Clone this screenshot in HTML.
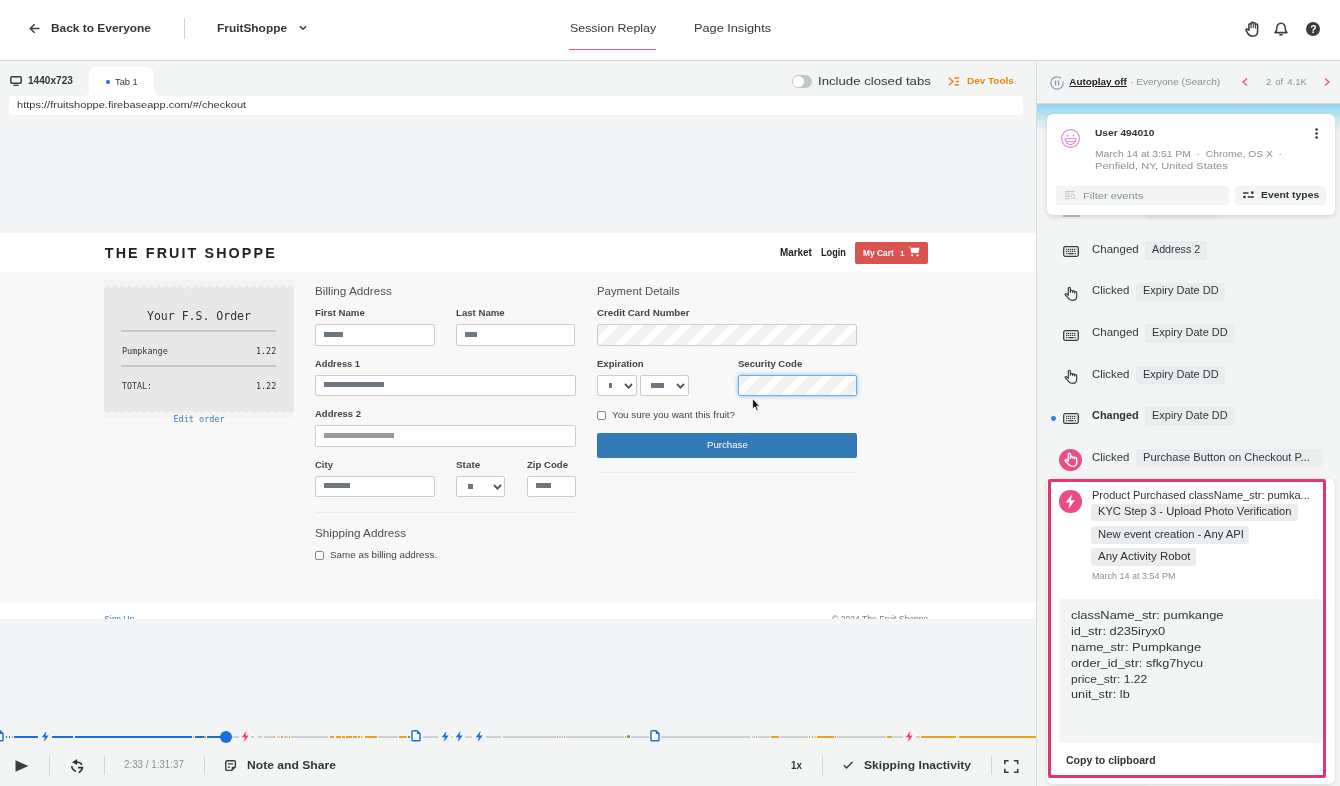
<!DOCTYPE html>
<html lang="en">
<head>
<meta charset="utf-8">
<title>Session Replay</title>
<style>
*{box-sizing:border-box;margin:0;padding:0}
html,body{width:1340px;height:786px;overflow:hidden;background:#f3f5f5;font-family:"Liberation Sans",sans-serif;color:#34373a}
.a{position:absolute;white-space:nowrap;line-height:1;transform-origin:0 0}
.b{font-weight:bold}
.g{color:#8a9095}

.mono{font-family:"DejaVu Sans Mono","Liberation Mono",monospace}
#app{position:absolute;left:0;top:0;width:1340px;height:786px;overflow:hidden;will-change:transform}
.d{position:absolute}
svg{position:absolute;overflow:visible}
.chip{position:absolute;background:#eaeced;border-radius:3px}
.inp{position:absolute;background:#fff;border:1px solid #ccc;border-radius:2px}
.m{position:absolute;background:#7b848d;height:4px}
.lab{font-weight:bold;color:#444}
.vd{position:absolute;width:1px;background:#d5d8da}
</style>
</head>
<body>
<div id="app">
<div class="d" style="left:0;top:115px;width:1036px;height:613px;background:#f4f5f7"></div>
<!-- top bar -->
<div class="d" style="left:0;top:0;width:1340px;height:61px;background:#fff;border-bottom:1px solid #d2d5d7"></div><svg style="left:29px;top:23px" width="11" height="11" viewBox="0 0 11 11"><path d="M10.5 5.5H1.8M5.6 1.2L1.3 5.5L5.6 9.8" fill="none" stroke="#3a3d40" stroke-width="1.5"/></svg><span class="a b" style="left:51.0px;top:23px;font-size:11.5px;transform:scaleX(1.036);">Back to Everyone</span><div class="d" style="left:183.5px;top:18px;width:1.5px;height:21px;background:#d0d3d5"></div><span class="a b" style="left:217.0px;top:23px;font-size:11.5px;transform:scaleX(1.034);">FruitShoppe</span><svg style="left:299px;top:25px" width="8" height="6" viewBox="0 0 8 6"><path d="M1 1.2L4 4.2L7 1.2" fill="none" stroke="#3a3d40" stroke-width="1.6"/></svg><span class="a" style="left:569.5px;top:23px;font-size:11.5px;transform:scaleX(1.078);">Session Replay</span><div class="d" style="left:569px;top:48.5px;width:87px;height:1.5px;background:#ee4b80"></div><span class="a" style="left:694.4px;top:23px;font-size:11.5px;transform:scaleX(1.106);">Page Insights</span><svg style="left:1245px;top:21px" width="15.200" height="16" viewBox="0 0 14 16" preserveAspectRatio="none"><path d="M3.6 9.2V3.6a1 1 0 0 1 2 0V2.2a1 1 0 0 1 2 0V2.6a1 1 0 0 1 2 0V4a1 1 0 0 1 2 0V10.5c0 3-1.8 4.7-4.6 4.7c-2.2 0-3.4-1-4.4-2.8L1 9.4c-.5-1 .7-1.8 1.5-1z" fill="none" stroke="#3a3d40" stroke-width="1.45" stroke-linejoin="round"/><path d="M5.6 3.4V7.4M7.6 2.6V7.2M9.6 3.2V7.4" stroke="#3a3d40" stroke-width="1" fill="none"/></svg><svg style="left:1274px;top:22px" width="14" height="14" viewBox="0 0 14 14"><path d="M1 10.6h12c-1.4-1-1.8-2.2-1.8-4.6c0-2.8-1.8-4.8-4.2-4.8S2.8 3.2 2.8 6C2.8 8.400 2.400 9.600 1 10.600z" fill="none" stroke="#3a3d40" stroke-width="1.55" stroke-linejoin="round"/><path d="M5.800 12.800h2.400" stroke="#3a3d40" stroke-width="1.4" stroke-linecap="round"/></svg><div class="d" style="left:1306px;top:22px;width:14px;height:14px;border-radius:50%;background:#3a3d40"></div><span class="a b" style="left:1310.2px;top:25px;font-size:10.4px;color:#fff">?</span>
<!-- tab row -->
<svg style="left:9.500px;top:76px" width="12" height="10" viewBox="0 0 12 10"><rect x="0.800" y="0.800" width="10.400" height="6.400" rx="1.200" fill="none" stroke="#3a3d40" stroke-width="1.500"/><path d="M3.500 9.300h5" stroke="#3a3d40" stroke-width="1.300"/></svg><span class="a b" style="left:28.2px;top:76px;font-size:10px;transform:scaleX(1.009);">1440x723</span><div class="d" style="left:89px;top:67px;width:65px;height:30px;background:#fff;border-radius:7px 7px 0 0"></div><svg style="left:83px;top:90px" width="77" height="6" viewBox="0 0 77 6"><path d="M0 6Q6 6 6 0V6zM77 6Q71 6 71 0V6z" fill="#fff"/></svg><div class="d" style="left:105.800px;top:79.500px;width:4.400px;height:4.800px;border-radius:50%;background:#1877f2"></div><span class="a" style="left:114.7px;top:77px;font-size:9.8px;transform:scaleX(0.951);">Tab 1</span><div class="d" style="left:9px;top:96px;width:1014px;height:19px;background:#fff;border-radius:3px"></div><span class="a" style="left:16.8px;top:100px;font-size:9.9px;transform:scaleX(1.119);">https://fruitshoppe.firebaseapp.com/#/checkout</span><div class="d" style="left:792px;top:75px;width:20px;height:12.500px;border-radius:7px;background:#c3c7ca"></div><div class="d" style="left:793px;top:76px;width:10.500px;height:10.500px;border-radius:50%;background:#fff"></div><span class="a" style="left:818.2px;top:76px;font-size:11.5px;transform:scaleX(1.146);">Include closed tabs</span><svg style="left:948px;top:77px" width="11" height="9" viewBox="0 0 11 9"><path d="M0.800 0.800L5 4.500L0.800 8.200M6.500 0.900H11M8 4.500H11M6.500 8.100H11" fill="none" stroke="#e8870e" stroke-width="1.500"/></svg><span class="a b" style="left:966.6px;top:76px;font-size:9.9px;transform:scaleX(1.007);color:#e8870e">Dev Tools</span>
<!-- replayed site -->
<div class="d" style="left:0;top:233px;width:1036px;height:386px;background:#f8f8f8"></div><div class="d" style="left:0;top:233px;width:1036px;height:38.500px;background:#fff"></div><span class="a b" style="left:104.8px;top:246px;font-size:14.3px;letter-spacing:2.11px;color:#222">THE FRUIT SHOPPE</span><span class="a b" style="left:780.4px;top:248px;font-size:10px;transform:scaleX(0.986);color:#222">Market</span><span class="a b" style="left:821.1px;top:248px;font-size:10px;transform:scaleX(0.915);color:#222">Login</span><div class="d" style="left:854.500px;top:242px;width:73px;height:21.500px;background:#d9534f;border-radius:2px"></div><span class="a b" style="left:862.6px;top:249px;font-size:9px;transform:scaleX(0.930);color:#fff">My Cart</span><span class="a b" style="left:900.0px;top:250px;font-size:8px;color:#fff">1</span><svg style="left:908px;top:246px" width="12" height="11" viewBox="0 0 12 11"><path d="M0 0.600H2L3.200 7H10.500L11.500 1.800H2.400z" fill="#fff"/><circle cx="4.200" cy="9.300" r="1.100" fill="#fff"/><circle cx="9.500" cy="9.300" r="1.100" fill="#fff"/></svg><div class="d" style="left:104px;top:280px;width:190px;height:138px;background:#f4f4f4"></div><svg style="left:104px;top:285.400px" width="190" height="128" viewBox="0 0 190 128"><path d="M0 3.600L3.65 0L7.31 3.600L10.96 0L14.62 3.600L18.27 0L21.92 3.600L25.58 0L29.23 3.600L32.88 0L36.54 3.600L40.19 0L43.85 3.600L47.50 0L51.15 3.600L54.81 0L58.46 3.600L62.12 0L65.77 3.600L69.42 0L73.08 3.600L76.73 0L80.38 3.600L84.04 0L87.69 3.600L91.35 0L95.00 3.600L98.65 0L102.31 3.600L105.96 0L109.62 3.600L113.27 0L116.92 3.600L120.58 0L124.23 3.600L127.88 0L131.54 3.600L135.19 0L138.85 3.600L142.50 0L146.15 3.600L149.81 0L153.46 3.600L157.12 0L160.77 3.600L164.42 0L168.08 3.600L171.73 0L175.38 3.600L179.04 0L182.69 3.600L186.35 0L190.00 3.6V125.600L186.35 128L182.69 125.600L179.04 128L175.38 125.600L171.73 128L168.08 125.600L164.42 128L160.77 125.600L157.12 128L153.46 125.600L149.81 128L146.15 125.600L142.50 128L138.85 125.600L135.19 128L131.54 125.600L127.88 128L124.23 125.600L120.58 128L116.92 125.600L113.27 128L109.62 125.600L105.96 128L102.31 125.600L98.65 128L95.00 125.600L91.35 128L87.69 125.600L84.04 128L80.38 125.600L76.73 128L73.08 125.600L69.42 128L65.77 125.600L62.12 128L58.46 125.600L54.81 128L51.15 125.600L47.50 128L43.85 125.600L40.19 128L36.54 125.600L32.88 128L29.23 125.600L25.58 128L21.92 125.600L18.27 128L14.62 125.600L10.96 128L7.31 125.600L3.65 128L0.00 125.600z" fill="#e8e8e8"/></svg><span class="a mono" style="left:147.0px;top:311px;font-size:11.6px;transform:scaleX(0.993);color:#333">Your F.S. Order</span><div class="d" style="left:121px;top:330px;width:155px;height:1.500px;background:#c3c8c9"></div><span class="a mono" style="left:122.2px;top:347px;font-size:8.5px;transform:scaleX(0.994);color:#333">Pumpkange</span><span class="a mono" style="left:255.7px;top:347px;font-size:8.5px;transform:scaleX(0.986);color:#333">1.22</span><div class="d" style="left:121px;top:365px;width:155px;height:1.500px;background:#c3c8c9"></div><span class="a mono" style="left:122.2px;top:382px;font-size:8.5px;transform:scaleX(0.973);color:#333">TOTAL:</span><span class="a mono" style="left:255.7px;top:382px;font-size:8.5px;transform:scaleX(0.986);color:#333">1.22</span><span class="a mono" style="left:173.5px;top:415px;font-size:8.5px;color:#3f7cbf">Edit order</span><span class="a" style="left:315.0px;top:286px;font-size:11px;transform:scaleX(1.067);color:#4b5056">Billing Address</span><span class="a lab" style="left:315.0px;top:308px;font-size:9.5px;transform:scaleX(1.014);">First Name</span><div class="inp" style="left:315px;top:324px;width:119.6px;height:21.7px;"></div><div class="d" style="left:324.3px;top:332px;width:18.9px;height:5.0px;background:#6e7781"></div><span class="a lab" style="left:455.8px;top:308px;font-size:9.5px;transform:scaleX(1.013);">Last Name</span><div class="inp" style="left:455.8px;top:324px;width:119.7px;height:21.7px;"></div><div class="d" style="left:465px;top:332px;width:12.0px;height:5.0px;background:#6e7781"></div><span class="a lab" style="left:315.0px;top:359px;font-size:9.5px;transform:scaleX(0.980);">Address 1</span><div class="inp" style="left:315px;top:374.8px;width:260.5px;height:21.4px;"></div><div class="d" style="left:324.3px;top:382.2px;width:59.9px;height:4.8px;background:#6e7781"></div><span class="a lab" style="left:315.0px;top:409px;font-size:9.5px;">Address 2</span><div class="inp" style="left:315px;top:425px;width:260.5px;height:21.6px;"></div><div class="d" style="left:324.3px;top:433px;width:69.6px;height:4.8px;background:#9a9a9a"></div><span class="a lab" style="left:315.0px;top:460px;font-size:9.5px;">City</span><div class="inp" style="left:315px;top:476.1px;width:119.6px;height:21.4px;"></div><div class="d" style="left:324.3px;top:483.4px;width:25.7px;height:4.6px;background:#6e7781"></div><span class="a lab" style="left:455.8px;top:460px;font-size:9.5px;transform:scaleX(1.042);">State</span><div class="inp" style="left:455.8px;top:476.1px;width:49.1px;height:21.4px;"></div><div class="d" style="left:468px;top:484px;width:5.0px;height:5.0px;background:#6e7781"></div><svg style="left:492.7px;top:484.3px" width="9" height="6" viewBox="0 0 9 6"><path d="M1 1L4.500 4.600L8 1" fill="none" stroke="#50555a" stroke-width="1.800"/></svg><span class="a lab" style="left:527.0px;top:460px;font-size:9.5px;transform:scaleX(1.011);">Zip Code</span><div class="inp" style="left:527px;top:476.1px;width:48.5px;height:21.4px;"></div><div class="d" style="left:535.9px;top:483.2px;width:15.1px;height:4.8px;background:#6e7781"></div><div class="d" style="left:315px;top:512px;width:261px;height:1px;background:#ececec"></div><span class="a" style="left:315.0px;top:528px;font-size:11px;transform:scaleX(1.063);color:#4b5056">Shipping Address</span><div class="d" style="left:315px;top:550.500px;width:9px;height:9px;background:#fff;border:1px solid #858585;border-radius:2px"></div><span class="a" style="left:330.0px;top:550px;font-size:9.5px;transform:scaleX(1.035);color:#444">Same as billing address.</span><span class="a" style="left:596.7px;top:286px;font-size:11px;transform:scaleX(1.034);color:#4b5056">Payment Details</span><span class="a lab" style="left:596.7px;top:308px;font-size:9.5px;transform:scaleX(1.025);">Credit Card Number</span><div class="inp" style="left:596.7px;top:324px;width:260.1px;height:21.7px;background:repeating-linear-gradient(135deg,#eff1f3 0,#eff1f3 8.200px,#fff 8.700px,#fff 15.500px,#eff1f3 16px,#eff1f3 17px);"></div><span class="a lab" style="left:596.7px;top:359px;font-size:9.5px;transform:scaleX(1.005);">Expiration</span><div class="inp" style="left:596.7px;top:374.8px;width:40.1px;height:21.4px;"></div><div class="d" style="left:608.6px;top:383px;width:3.6px;height:4.8px;background:#6e7781"></div><svg style="left:623.5px;top:383px" width="9" height="6" viewBox="0 0 9 6"><path d="M1 1L4.500 4.600L8 1" fill="none" stroke="#50555a" stroke-width="1.800"/></svg><div class="inp" style="left:639.9px;top:374.8px;width:49.3px;height:21.4px;"></div><div class="d" style="left:650.5px;top:383px;width:13.5px;height:4.5px;background:#6e7781"></div><svg style="left:675.5px;top:383px" width="9" height="6" viewBox="0 0 9 6"><path d="M1 1L4.500 4.600L8 1" fill="none" stroke="#50555a" stroke-width="1.800"/></svg><span class="a lab" style="left:737.8px;top:359px;font-size:9.5px;transform:scaleX(1.006);">Security Code</span><div class="inp" style="left:737.8px;top:374.8px;width:119.0px;height:21.4px;background:repeating-linear-gradient(135deg,#eff1f3 0,#eff1f3 8.200px,#fff 8.700px,#fff 15.500px,#eff1f3 16px,#eff1f3 17px);border-color:#66afe9;box-shadow:0 0 4px rgba(102,175,233,.8)"></div><div class="d" style="left:597px;top:411px;width:9px;height:9px;background:#fff;border:1px solid #858585;border-radius:2px"></div><span class="a" style="left:612.0px;top:410px;font-size:9.5px;transform:scaleX(1.034);color:#444">You sure you want this fruit?</span><div class="d" style="left:597px;top:433px;width:260px;height:25px;background:#337ab7;border-radius:2px"></div><span class="a" style="left:706.6px;top:440px;font-size:9.5px;transform:scaleX(1.016);color:#fff">Purchase</span><div class="d" style="left:597px;top:472px;width:260px;height:1px;background:#efefef"></div><svg style="left:752px;top:397.500px" width="8" height="14" viewBox="0 0 8 14"><path d="M0.600 0.600V11L3 8.800L4.700 12.800L6.300 12.100L4.600 8.200H7.600z" fill="#111" stroke="#fff" stroke-width="0.800"/></svg><div class="d" style="left:0;top:602px;width:1036px;height:17px;background:#fff;overflow:hidden"></div><div class="d" style="left:0;top:602px;width:1036px;height:17px;overflow:hidden"><div class="d" style="left:0;top:-602px"><span class="a" style="left:104.0px;top:615px;font-size:8.5px;color:#337ab7">Sign Up</span><span class="a" style="left:831.5px;top:615px;font-size:8.5px;transform:scaleX(1.009);color:#777">© 2024 The Fruit Shoppe</span></div></div>
<!-- timeline -->
<div class="d" style="left:232px;top:736.2px;width:6.6px;height:1.6px;background:#cdd1d3"></div><div class="d" style="left:251px;top:736.2px;width:3.0px;height:1.6px;background:#cdd1d3"></div><div class="d" style="left:257.8px;top:736.2px;width:3.9px;height:1.6px;background:#cdd1d3"></div><div class="d" style="left:264px;top:736.2px;width:9.5px;height:1.6px;background:#cdd1d3"></div><div class="d" style="left:276.5px;top:736.2px;width:3.0px;height:1.6px;background:#cdd1d3"></div><div class="d" style="left:284px;top:736.2px;width:3.5px;height:1.6px;background:#cdd1d3"></div><div class="d" style="left:290.8px;top:736.2px;width:36.9px;height:1.6px;background:#cdd1d3"></div><div class="d" style="left:378px;top:736.2px;width:19.5px;height:1.6px;background:#cdd1d3"></div><div class="d" style="left:422.8px;top:736.2px;width:15.2px;height:1.6px;background:#cdd1d3"></div><div class="d" style="left:451px;top:736.2px;width:2.0px;height:1.6px;background:#cdd1d3"></div><div class="d" style="left:465px;top:736.2px;width:7.4px;height:1.6px;background:#cdd1d3"></div><div class="d" style="left:485.8px;top:736.2px;width:15.2px;height:1.6px;background:#cdd1d3"></div><div class="d" style="left:503px;top:736.2px;width:53.0px;height:1.6px;background:#cdd1d3"></div><div class="d" style="left:559px;top:736.2px;width:4.0px;height:1.6px;background:#cdd1d3"></div><div class="d" style="left:566px;top:736.2px;width:58.0px;height:1.6px;background:#cdd1d3"></div><div class="d" style="left:631px;top:736.2px;width:18.4px;height:1.6px;background:#cdd1d3"></div><div class="d" style="left:661px;top:736.2px;width:89.0px;height:1.6px;background:#cdd1d3"></div><div class="d" style="left:752px;top:736.2px;width:2.5px;height:1.6px;background:#cdd1d3"></div><div class="d" style="left:758px;top:736.2px;width:12.0px;height:1.6px;background:#cdd1d3"></div><div class="d" style="left:780px;top:736.2px;width:27.6px;height:1.6px;background:#cdd1d3"></div><div class="d" style="left:814px;top:736.2px;width:2.0px;height:1.6px;background:#cdd1d3"></div><div class="d" style="left:837.3px;top:736.2px;width:48.7px;height:1.6px;background:#cdd1d3"></div><div class="d" style="left:893px;top:736.2px;width:9.7px;height:1.6px;background:#cdd1d3"></div><div class="d" style="left:915.7px;top:736.2px;width:4.1px;height:1.6px;background:#cdd1d3"></div><div class="d" style="left:956.8px;top:736.2px;width:1.2px;height:1.6px;background:#cdd1d3"></div><div class="d" style="left:5.8px;top:736px;width:1.6px;height:2px;background:#1a6ee0"></div><div class="d" style="left:8.5px;top:736px;width:1.2px;height:2px;background:#1a6ee0"></div><div class="d" style="left:14px;top:736px;width:24.4px;height:2px;background:#1a6ee0"></div><div class="d" style="left:51.8px;top:736px;width:21.0px;height:2px;background:#1a6ee0"></div><div class="d" style="left:75.3px;top:736px;width:116.7px;height:2px;background:#1a6ee0"></div><div class="d" style="left:195px;top:736px;width:8.7px;height:2px;background:#1a6ee0"></div><div class="d" style="left:206.8px;top:736px;width:15.2px;height:2px;background:#1a6ee0"></div><div class="d" style="left:11.6px;top:736.1px;width:1.2px;height:1.8px;background:#f0a020"></div><div class="d" style="left:192.5px;top:736.1px;width:1.5px;height:1.8px;background:#f0a020"></div><div class="d" style="left:204.3px;top:736.1px;width:1.3px;height:1.8px;background:#f0a020"></div><div class="d" style="left:274px;top:736.1px;width:1.0px;height:1.8px;background:#f0a020"></div><div class="d" style="left:280.7px;top:736.1px;width:2.3px;height:1.8px;background:#f0a020"></div><div class="d" style="left:288.6px;top:736.1px;width:1.2px;height:1.8px;background:#f0a020"></div><div class="d" style="left:329.8px;top:736.1px;width:4.2px;height:1.8px;background:#f0a020"></div><div class="d" style="left:336px;top:736.1px;width:5.0px;height:1.8px;background:#f0a020"></div><div class="d" style="left:342px;top:736.1px;width:2.8px;height:1.8px;background:#f0a020"></div><div class="d" style="left:346px;top:736.1px;width:6.0px;height:1.8px;background:#f0a020"></div><div class="d" style="left:353px;top:736.1px;width:4.0px;height:1.8px;background:#f0a020"></div><div class="d" style="left:358.4px;top:736.1px;width:1.2px;height:1.8px;background:#f0a020"></div><div class="d" style="left:361px;top:736.1px;width:1.2px;height:1.8px;background:#f0a020"></div><div class="d" style="left:365px;top:736.1px;width:11.8px;height:1.8px;background:#f0a020"></div><div class="d" style="left:399px;top:736.1px;width:7.9px;height:1.8px;background:#f0a020"></div><div class="d" style="left:556.8px;top:736.1px;width:1.0px;height:1.8px;background:#f0a020"></div><div class="d" style="left:564px;top:736.1px;width:1.0px;height:1.8px;background:#f0a020"></div><div class="d" style="left:625px;top:736.1px;width:0.8px;height:1.8px;background:#f0a020"></div><div class="d" style="left:756px;top:736.1px;width:1.0px;height:1.8px;background:#f0a020"></div><div class="d" style="left:771px;top:736.1px;width:8.2px;height:1.8px;background:#f0a020"></div><div class="d" style="left:809px;top:736.1px;width:1.0px;height:1.8px;background:#f0a020"></div><div class="d" style="left:812px;top:736.1px;width:1.0px;height:1.8px;background:#f0a020"></div><div class="d" style="left:817px;top:736.1px;width:17.2px;height:1.8px;background:#f0a020"></div><div class="d" style="left:835.3px;top:736.1px;width:0.9px;height:1.8px;background:#f0a020"></div><div class="d" style="left:887px;top:736.1px;width:5.0px;height:1.8px;background:#f0a020"></div><div class="d" style="left:920.9px;top:736.1px;width:35.1px;height:1.8px;background:#f0a020"></div><div class="d" style="left:959px;top:736.1px;width:77.0px;height:1.8px;background:#f0a020"></div><div class="d" style="left:407.8px;top:736.1px;width:2.0px;height:1.8px;background:#3aa655"></div><div class="d" style="left:626.700px;top:734.900px;width:3px;height:3px;border-radius:50%;background:#3f9e63"></div><svg style="left:41.4px;top:730.7px" width="8.4" height="11.0" viewBox="0 0 8 11"><path d="M5.400 0L0.500 6.200H3.600L2.600 11L7.500 4.600H4.400z" fill="#1a6ee0"/></svg><svg style="left:240.8px;top:730.7px" width="8.4" height="11.0" viewBox="0 0 8 11"><path d="M5.400 0L0.500 6.200H3.600L2.600 11L7.500 4.600H4.400z" fill="#ee3f7a"/></svg><svg style="left:440.8px;top:730.7px" width="8.4" height="11.0" viewBox="0 0 8 11"><path d="M5.400 0L0.500 6.200H3.600L2.600 11L7.500 4.600H4.400z" fill="#1a6ee0"/></svg><svg style="left:454.8px;top:730.7px" width="8.4" height="11.0" viewBox="0 0 8 11"><path d="M5.400 0L0.500 6.200H3.600L2.600 11L7.500 4.600H4.400z" fill="#1a6ee0"/></svg><svg style="left:474.8px;top:730.7px" width="8.4" height="11.0" viewBox="0 0 8 11"><path d="M5.400 0L0.500 6.200H3.600L2.600 11L7.500 4.600H4.400z" fill="#1a6ee0"/></svg><svg style="left:905.2px;top:730.7px" width="8.4" height="11.0" viewBox="0 0 8 11"><path d="M5.400 0L0.500 6.200H3.600L2.600 11L7.500 4.600H4.400z" fill="#ee3f7a"/></svg><svg style="left:410.8px;top:730.2px" width="10" height="11.600" viewBox="0 0 9 11"><path d="M1.800 0.700H5.600L8.300 3.400V9.200a1.100 1.100 0 0 1 -1.100 1.100H1.800a1.100 1.100 0 0 1 -1.100 -1.100V1.800a1.100 1.100 0 0 1 1.100 -1.100z" fill="#fff" stroke="#1a6ee0" stroke-width="1.400"/><path d="M5.300 0.700V3.700H8.300z" fill="#1a6ee0"/></svg><svg style="left:650px;top:730.2px" width="10" height="11.600" viewBox="0 0 9 11"><path d="M1.800 0.700H5.600L8.300 3.400V9.200a1.100 1.100 0 0 1 -1.100 1.100H1.800a1.100 1.100 0 0 1 -1.100 -1.100V1.800a1.100 1.100 0 0 1 1.100 -1.100z" fill="#fff" stroke="#1a6ee0" stroke-width="1.400"/><path d="M5.300 0.700V3.700H8.300z" fill="#1a6ee0"/></svg><svg style="left:-6px;top:730.2px" width="10" height="11.600" viewBox="0 0 9 11"><path d="M1.800 0.700H5.600L8.300 3.400V9.200a1.100 1.100 0 0 1 -1.100 1.100H1.800a1.100 1.100 0 0 1 -1.100 -1.100V1.800a1.100 1.100 0 0 1 1.100 -1.100z" fill="#fff" stroke="#1a6ee0" stroke-width="1.400"/><path d="M5.300 0.700V3.700H8.300z" fill="#1a6ee0"/></svg><div class="d" style="left:219.800px;top:730.800px;width:12.400px;height:12.400px;border-radius:50%;background:#1a6ee0"></div><svg style="left:14.700px;top:760px" width="14" height="12" viewBox="0 0 14 12"><path d="M0.500 0.300L13.300 6L0.500 11.700z" fill="#3a3d40"/></svg><div class="vd" style="left:49px;top:756px;height:18.500px"></div><svg style="left:71px;top:759px" width="12" height="14" viewBox="0 0 12 14"><path d="M1.100 3.300L6.100 0.100V6z" fill="#2f3235"/><path d="M5.500 3Q9.300 3 10.900 5.800M0.600 7.200Q1.200 11 4.900 12.400M7 8.600H11.400Q11 12 7.600 13.600" fill="none" stroke="#2f3235" stroke-width="1.600"/></svg><div class="vd" style="left:104px;top:756px;height:18.500px"></div><span class="a g" style="left:124.3px;top:760px;font-size:10.4px;transform:scaleX(0.942);">2:33 / 1:31:37</span><div class="vd" style="left:204px;top:756px;height:18.500px"></div><svg style="left:224.900px;top:759.800px" width="11.100" height="11.100" viewBox="0 0 11.100 11.100"><path d="M2.200 0.700H8.900a1.500 1.500 0 0 1 1.500 1.500V6.800L6.800 10.400H2.200a1.500 1.500 0 0 1 -1.500 -1.500V2.200a1.500 1.500 0 0 1 1.500 -1.500z" fill="none" stroke="#3a3d40" stroke-width="1.400"/><path d="M2.900 3.800H8.200M2.700 7.200H5.100" stroke="#3a3d40" stroke-width="1.200"/><path d="M6.600 10.400V8a1.300 1.300 0 0 1 1.300 -1.300H10.400z" fill="#3a3d40"/></svg><span class="a b" style="left:246.6px;top:760px;font-size:11.5px;transform:scaleX(1.054);">Note and Share</span><span class="a b" style="left:791.2px;top:760px;font-size:11.3px;transform:scaleX(0.867);">1x</span><div class="vd" style="left:822px;top:756px;height:18.500px"></div><svg style="left:843px;top:761px" width="10" height="8" viewBox="0 0 10 8"><path d="M0.800 4.200L3.600 7L9.400 1" fill="none" stroke="#3a3d40" stroke-width="1.500"/></svg><span class="a b" style="left:863.8px;top:760px;font-size:11.5px;transform:scaleX(1.054);">Skipping Inactivity</span><div class="vd" style="left:991px;top:756px;height:18.500px"></div><svg style="left:1004px;top:759.500px" width="14.500" height="13" viewBox="0 0 14.500 13"><path d="M0.800 4.200V0.800H4.600M9.900 0.800H13.700V4.200M13.700 8.800V12.200H9.900M4.600 12.200H0.800V8.800" fill="none" stroke="#3a3d40" stroke-width="1.600"/></svg>
<!-- side panel -->
<div class="d" style="left:1036px;top:61px;width:1px;height:725px;background:#d9dcde"></div><div class="d" style="left:1037px;top:103px;width:303px;height:30px;background:linear-gradient(#8fd3ea 0,#a8ddee 25%,#d3ecf3 60%,#f3f5f5 100%)"></div><div class="d" style="left:1037px;top:102.500px;width:303px;height:1px;background:#d5d9db"></div><svg style="left:1050px;top:75.500px" width="14" height="14" viewBox="0 0 14 14"><circle cx="7" cy="7" r="6.200" fill="none" stroke="#8c9cb0" stroke-width="1.200" stroke-dasharray="33 3 1.500 1.500"/><path d="M5.500 4.600V9.400M8.500 4.600V9.400" stroke="#8c9cb0" stroke-width="1.300"/></svg><span class="a b" style="left:1069.3px;top:77px;font-size:9.9px;color:#222;text-decoration:underline">Autoplay off</span><span class="a g" style="left:1130.0px;top:77px;font-size:9.9px;transform:scaleX(1.021);">· Everyone (Search)</span><svg style="left:1242.400px;top:78px" width="6" height="8" viewBox="0 0 6 8"><path d="M5 0.500L1 4L5 7.500" fill="none" stroke="#ee4b80" stroke-width="1.300"/></svg><span class="a g" style="left:1265.6px;top:77px;font-size:9.9px;transform:scaleX(0.959);word-spacing:1.5px">2 of 4.1K</span><svg style="left:1323.800px;top:78px" width="6" height="8" viewBox="0 0 6 8"><path d="M1 0.500L5 4L1 7.500" fill="none" stroke="#ee4b80" stroke-width="1.300"/></svg><span class="a" style="left:1091.7px;top:245px;font-size:10.4px;transform:scaleX(1.107);">Changed</span><div class="chip" style="left:1145.1px;top:241.0px;width:61.7px;height:18.6px"></div><span class="a" style="left:1151.8px;top:245px;font-size:10.4px;transform:scaleX(1.032);">Address 2</span><svg style="left:1062.9px;top:246.4px" width="16" height="11" viewBox="0 0 16 11"><rect x="0.700" y="0.700" width="14.600" height="9.600" rx="1.500" fill="none" stroke="#3a3d40" stroke-width="1.300"/><path d="M3 3.400H13.200M3 5.400H13.200" stroke="#3a3d40" stroke-width="1.100" stroke-dasharray="1.300 0.700"/><path d="M3 7.700H4.300M5.300 7.700H10.700M11.700 7.700H13" stroke="#3a3d40" stroke-width="1.200"/></svg><span class="a" style="left:1091.7px;top:286px;font-size:10.4px;transform:scaleX(1.100);">Clicked</span><div class="chip" style="left:1135.9px;top:282.55px;width:89.0px;height:18.6px"></div><span class="a" style="left:1142.6px;top:286px;font-size:10.4px;transform:scaleX(1.056);">Expiry Date DD</span><svg style="left:1064.1px;top:286.15000000000003px" width="14" height="15" viewBox="0 0 14 15"><path d="M4.300 9.300V2.300a1.050 1.050 0 0 1 2.100 0V6.200V5.300a1.050 1.050 0 0 1 2.100 0V6.300V5.900a1.050 1.050 0 0 1 2.100 0V6.900V6.600a1.050 1.050 0 0 1 2.100 0V10.200c0 2.600 -1.700 4.200 -4.300 4.200c-2 0 -3.300 -0.800 -4.300 -2.500L1.200 8.900c-0.500 -1 0.700 -1.800 1.500 -1z" fill="none" stroke="#3a3d40" stroke-width="1.2" stroke-linejoin="round"/></svg><span class="a" style="left:1091.7px;top:328px;font-size:10.4px;transform:scaleX(1.107);">Changed</span><div class="chip" style="left:1145.1px;top:324.1px;width:88.7px;height:18.6px"></div><span class="a" style="left:1151.8px;top:328px;font-size:10.4px;transform:scaleX(1.057);">Expiry Date DD</span><svg style="left:1062.9px;top:329.5px" width="16" height="11" viewBox="0 0 16 11"><rect x="0.700" y="0.700" width="14.600" height="9.600" rx="1.500" fill="none" stroke="#3a3d40" stroke-width="1.300"/><path d="M3 3.400H13.200M3 5.400H13.200" stroke="#3a3d40" stroke-width="1.100" stroke-dasharray="1.300 0.700"/><path d="M3 7.700H4.300M5.300 7.700H10.700M11.700 7.700H13" stroke="#3a3d40" stroke-width="1.200"/></svg><span class="a" style="left:1091.7px;top:370px;font-size:10.4px;transform:scaleX(1.100);">Clicked</span><div class="chip" style="left:1135.9px;top:365.65px;width:89.0px;height:18.6px"></div><span class="a" style="left:1142.6px;top:370px;font-size:10.4px;transform:scaleX(1.056);">Expiry Date DD</span><svg style="left:1064.1px;top:369.25px" width="14" height="15" viewBox="0 0 14 15"><path d="M4.300 9.300V2.300a1.050 1.050 0 0 1 2.100 0V6.200V5.300a1.050 1.050 0 0 1 2.100 0V6.300V5.900a1.050 1.050 0 0 1 2.100 0V6.900V6.600a1.050 1.050 0 0 1 2.100 0V10.200c0 2.600 -1.700 4.200 -4.300 4.200c-2 0 -3.300 -0.800 -4.300 -2.500L1.200 8.900c-0.500 -1 0.700 -1.800 1.500 -1z" fill="none" stroke="#3a3d40" stroke-width="1.2" stroke-linejoin="round"/></svg><span class="a b" style="left:1091.7px;top:411px;font-size:10.4px;transform:scaleX(1.051);color:#303437">Changed</span><div class="chip" style="left:1145.1px;top:407.2px;width:88.7px;height:18.6px"></div><span class="a" style="left:1151.8px;top:411px;font-size:10.4px;transform:scaleX(1.057);">Expiry Date DD</span><svg style="left:1062.9px;top:412.59999999999997px" width="16" height="11" viewBox="0 0 16 11"><rect x="0.700" y="0.700" width="14.600" height="9.600" rx="1.500" fill="none" stroke="#3a3d40" stroke-width="1.300"/><path d="M3 3.400H13.200M3 5.400H13.200" stroke="#3a3d40" stroke-width="1.100" stroke-dasharray="1.300 0.700"/><path d="M3 7.700H4.300M5.300 7.700H10.700M11.700 7.700H13" stroke="#3a3d40" stroke-width="1.200"/></svg><span class="a" style="left:1091.7px;top:453px;font-size:10.4px;transform:scaleX(1.100);">Clicked</span><div class="chip" style="left:1135.9px;top:448.75px;width:185.7px;height:18.6px"></div><span class="a" style="left:1142.6px;top:453px;font-size:10.4px;transform:scaleX(1.075);">Purchase Button on Checkout P...</span><div class="d" style="left:1059px;top:449.2px;width:23px;height:22px;border-radius:50%;background:#ee4b80"></div><svg style="left:1063.6px;top:452.35px" width="14" height="15" viewBox="0 0 14 15"><path d="M4.300 9.300V2.300a1.050 1.050 0 0 1 2.100 0V6.200V5.300a1.050 1.050 0 0 1 2.100 0V6.300V5.900a1.050 1.050 0 0 1 2.100 0V6.900V6.600a1.050 1.050 0 0 1 2.100 0V10.200c0 2.600 -1.700 4.200 -4.300 4.200c-2 0 -3.300 -0.800 -4.300 -2.500L1.200 8.900c-0.500 -1 0.700 -1.800 1.500 -1z" fill="none" stroke="#fff" stroke-width="1.4" stroke-linejoin="round"/></svg><div class="d" style="left:1051px;top:415.900px;width:4.800px;height:4.800px;border-radius:50%;background:#2f80ed"></div><div class="d" style="left:1062.500px;top:215px;width:17px;height:2px;background:#bfc3c6"></div><div class="chip" style="left:1145px;top:205px;width:73.0px;height:13.5px"></div><div class="d" style="left:1047px;top:114.300px;width:288px;height:100.500px;background:#fff;border-radius:6px;box-shadow:0 2px 5px rgba(0,0,0,.13)"></div><svg style="left:1061px;top:128.700px" width="19" height="19" viewBox="0 0 19 19"><circle cx="9.500" cy="9.500" r="8.900" fill="none" stroke="#d889d0" stroke-width="1.100"/><path d="M4 9.800H15C15 13.200 12.700 15.500 9.500 15.500S4 13.200 4 9.800z" fill="none" stroke="#d889d0" stroke-width="1.100" stroke-linejoin="round"/><path d="M4.600 12.600H14.400" stroke="#d889d0" stroke-width="1"/><circle cx="6.500" cy="6.600" r="0.900" fill="#d889d0"/><circle cx="12.500" cy="6.600" r="0.900" fill="#d889d0"/></svg><span class="a b" style="left:1094.6px;top:128px;font-size:9.9px;transform:scaleX(1.030);color:#303437">User 494010</span><svg style="left:1315px;top:128px" width="3.200" height="11" viewBox="0 0 3.200 11"><circle cx="1.600" cy="1.500" r="1.350" fill="#303437"/><circle cx="1.600" cy="5.500" r="1.350" fill="#303437"/><circle cx="1.600" cy="9.500" r="1.350" fill="#303437"/></svg><span class="a g" style="left:1094.6px;top:149px;font-size:9.9px;transform:scaleX(1.045);">March 14 at 3:51 PM &nbsp;·&nbsp; Chrome, OS X &nbsp;·</span><span class="a g" style="left:1094.6px;top:161px;font-size:9.9px;transform:scaleX(1.121);">Penfield, NY, United States</span><div class="d" style="left:1056.200px;top:186.200px;width:172.700px;height:18.600px;background:#f3f5f5;border-radius:3px"></div><svg style="left:1065px;top:191px" width="11" height="9" viewBox="0 0 11 9"><path d="M0 0.600H10M0 3H4.500M0 5.400H4.500M0 7.800H4.500" stroke="#c5c9cc" stroke-width="1.100"/><circle cx="7.600" cy="5.300" r="2" fill="none" stroke="#c5c9cc" stroke-width="1"/><path d="M9 6.800L10.600 8.400" stroke="#c5c9cc" stroke-width="1"/></svg><span class="a g" style="left:1083.4px;top:191px;font-size:9.9px;transform:scaleX(1.121);">Filter events</span><div class="d" style="left:1235px;top:186.200px;width:91px;height:18.600px;background:#f3f5f5;border-radius:3px"></div><svg style="left:1242.600px;top:191px" width="11.500" height="8" viewBox="0 0 11.500 8"><path d="M0 1.900H5.500M4.800 6.100H11" stroke="#303437" stroke-width="1.500"/><circle cx="9.300" cy="1.700" r="1.350" fill="#303437"/><circle cx="1.500" cy="6" r="1.350" fill="#303437"/></svg><span class="a b" style="left:1261.0px;top:190px;font-size:9.9px;transform:scaleX(1.050);color:#303437">Event types</span><div class="d" style="left:1047px;top:479px;width:288px;height:304.500px;background:#fff;border-radius:6px;box-shadow:0 1px 4px rgba(0,0,0,.12)"></div><div class="d" style="left:1048px;top:479px;width:277.500px;height:298.600px;border:3px solid #e0366f;border-radius:2px"></div><div class="d" style="left:1059px;top:490px;width:22.500px;height:22.500px;border-radius:50%;background:#ee4b80"></div><svg style="left:1065.300px;top:493.700px" width="10.600" height="15" viewBox="0 0 8 11"><path d="M5.400 0L0.500 6.200H3.600L2.600 11L7.500 4.600H4.400z" fill="#fff"/></svg><span class="a" style="left:1091.5px;top:491px;font-size:10.3px;transform:scaleX(1.069);color:#303437">Product Purchased className_str: pumka...</span><div class="chip" style="left:1091.1px;top:503.8px;width:206.7px;height:17.7px"></div><span class="a" style="left:1097.5px;top:507px;font-size:10px;transform:scaleX(1.115);color:#303437">KYC Step 3 - Upload Photo Verification</span><div class="chip" style="left:1091.1px;top:526.3px;width:158.4px;height:18.1px"></div><span class="a" style="left:1097.5px;top:530px;font-size:10px;transform:scaleX(1.127);color:#303437">New event creation - Any API</span><div class="chip" style="left:1091.1px;top:548.4px;width:105.3px;height:18.1px"></div><span class="a" style="left:1097.5px;top:552px;font-size:10px;transform:scaleX(1.148);color:#303437">Any Activity Robot</span><span class="a g" style="left:1091.7px;top:572px;font-size:8.5px;transform:scaleX(1.058);">March 14 at 3:54 PM</span><div class="d" style="left:1059px;top:599px;width:263px;height:144px;background:#f3f5f5;border-radius:3px"></div><span class="a" style="left:1070.8px;top:611px;font-size:10.4px;transform:scaleX(1.240);color:#303437">className_str: pumkange</span><span class="a" style="left:1070.8px;top:627px;font-size:10.4px;transform:scaleX(1.235);color:#303437">id_str: d235iryx0</span><span class="a" style="left:1070.8px;top:643px;font-size:10.4px;transform:scaleX(1.245);color:#303437">name_str: Pumpkange</span><span class="a" style="left:1070.8px;top:659px;font-size:10.4px;transform:scaleX(1.224);color:#303437">order_id_str: sfkg7hycu</span><span class="a" style="left:1070.8px;top:675px;font-size:10.4px;transform:scaleX(1.157);color:#303437">price_str: 1.22</span><span class="a" style="left:1070.8px;top:690px;font-size:10.4px;transform:scaleX(1.225);color:#303437">unit_str: lb</span><span class="a b" style="left:1066.2px;top:756px;font-size:10px;transform:scaleX(1.054);color:#303437">Copy to clipboard</span><div class="chip" style="left:1145px;top:784.5px;width:85.0px;height:15.5px"></div>
</div>
</body>
</html>
